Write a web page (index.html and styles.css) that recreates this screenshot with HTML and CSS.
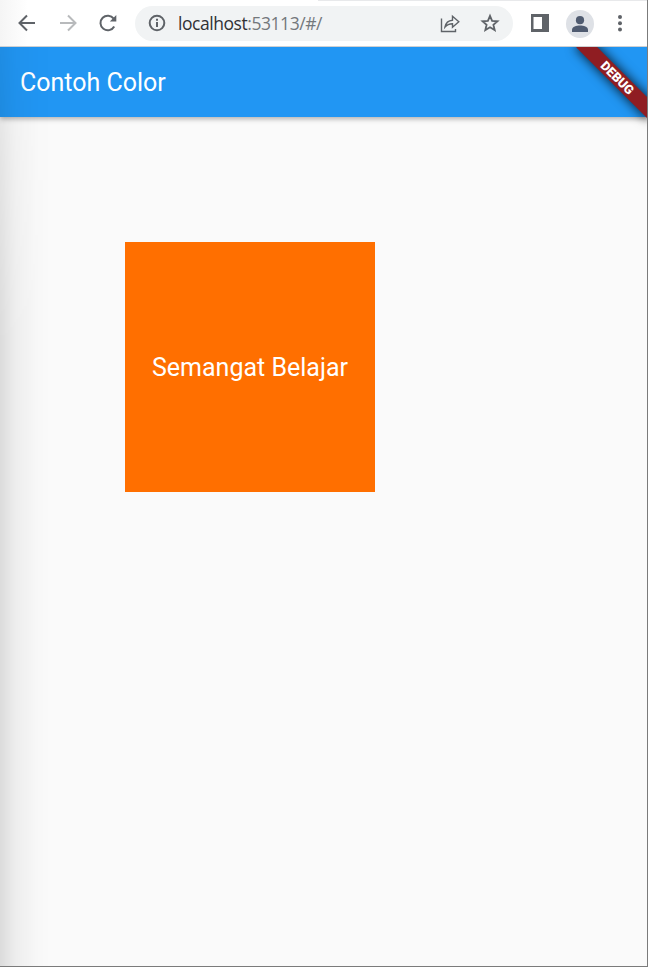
FILE: index.html
```html
<!DOCTYPE html>
<html lang="id">
<head>
<meta charset="utf-8">
<title>Contoh Color</title>
<link rel="stylesheet" href="styles.css">
</head>
<body>
<div class="window">
  <header class="toolbar">
    <svg class="icon back" viewBox="0 0 20 20"><path d="M18 10H3M10 2.500 2.500 10l7.500 7.500"/></svg>
    <svg class="icon forward" viewBox="0 0 20 20"><path d="M2 10h15M10 2.500 17.500 10 10 17.500"/></svg>
    <svg class="icon reload" viewBox="0 0 20 20"><path d="M16.200 13.500A7.300 7.300 0 1 1 15.700 5.700"/><path class="solid" d="M18.300 2v6.500h-6.500z"/></svg>
    <div class="omnibox">
      <svg class="icon info" viewBox="0 0 20 20"><circle cx="10" cy="10" r="7.300"/><path d="M10 9v5M10 5.800v2"/></svg>
      <span class="url"><span class="host">localhost</span>:53113/#/</span>
      <svg class="icon share" viewBox="0 0 20 20"><path d="M1.500 5.500v13h14v-2.500M5 14c.8-4.300 3.500-6.500 7.500-6.800V3.300l6.300 5.500-6.300 5.400v-3.500c-3.500 0-5.500.9-7.500 3.300z"/></svg>
      <svg class="icon star" viewBox="0 0 20 20"><path d="m10 2.800 2.100 5 5.400.5-4.100 3.500 1.300 5.300-4.700-2.800-4.700 2.800 1.300-5.300-4.100-3.500 5.400-.5z"/></svg>
    </div>
    <svg class="icon panel" viewBox="0 0 20 20"><path class="solid" fill-rule="evenodd" d="M1 1h18v18H1zM3.500 4v12h8.500V4z"/></svg>
    <span class="avatar"><svg class="icon person" viewBox="0 0 20 20"><circle class="solid" cx="10" cy="6.200" r="4.100"/><path class="solid" d="M2 18v-2.500c0-2.700 4.500-4.100 8-4.100s8 1.400 8 4.100V18z"/></svg></span>
    <svg class="icon more" viewBox="0 0 20 20"><circle class="solid" cx="10" cy="4" r="2"/><circle class="solid" cx="10" cy="10.300" r="2"/><circle class="solid" cx="10" cy="16.600" r="2"/></svg>
  </header>
  <main class="app">
    <div class="appbar"><h1>Contoh Color</h1></div>
    <div class="box">Semangat Belajar</div>
    <div class="banner">DEBUG</div>
    <div class="edge-shade"></div>
  </main>
</div>
</body>
</html>
```
FILE: styles.css
```css
* { box-sizing: border-box; }
body { margin: 0; font-family: Roboto, sans-serif; background: #fafafa; }
.window {
  position: relative;
  display: flex;
  flex-direction: column;
  height: 967px;
  overflow: hidden;
  border-right: 1px solid #7b7b7b;
  border-bottom: 1px solid #7b7b7b;
}
.toolbar {
  flex: none;
  display: flex;
  align-items: center;
  height: 47px;
  padding: 1px 0 0 17px;
  border-bottom: 1px solid #cfd0d2;
  background:
    linear-gradient(#e8e9eb, #e8e9eb) 318px 0 / 330px 1px no-repeat,
    linear-gradient(90deg, #f5f5f5, #fff 28px);
}
.icon { flex: none; width: 20px; height: 20px; margin-top: -1px; fill: none; stroke: #5f6368; stroke-width: 2; }
.icon .solid { fill: #5f6368; stroke: none; }
.forward { margin-left: 21px; stroke: #b8babc; }
.reload { margin-left: 20px; }
.omnibox {
  display: flex;
  align-items: center;
  width: 378px;
  height: 35px;
  margin-left: 17px;
  padding: 0 13px 0 12px;
  border-radius: 18px;
  background: #f1f3f4;
}
.url {
  flex: 1;
  margin: -2px 0 0 11px;
  font: 17.5px/24px "Open Sans", sans-serif;
  letter-spacing: -0.45px;
  color: #74787c;
}
.host { color: #303134; }
.share { stroke-width: 1.400; }
.star { margin-left: 20px; stroke-width: 1.800; }
.panel { margin-left: 17px; }
.avatar {
  display: flex;
  align-items: center;
  justify-content: center;
  width: 28px;
  height: 28px;
  margin-left: 16px;
  border-radius: 50%;
  background: #dee1e6;
}
.person { margin-top: 0; }
.person .solid { fill: #4f5b70; }
.more { margin-left: 16px; }
.app { position: relative; flex: 1; overflow: hidden; background: #fafafa; }
.appbar {
  display: flex;
  align-items: center;
  height: 70px;
  padding: 2px 0 0 20px;
  background: #2196f3;
  box-shadow: 0 2px 5px rgba(0, 0, 0, 0.3);
}
h1 { margin: 0; font-size: 25px; font-weight: 400; line-height: 30px; color: #fff; }
.box {
  display: flex;
  align-items: center;
  justify-content: center;
  width: 250px;
  height: 250px;
  margin: 125px 0 0 125px;
  background: #ff6f00;
  color: #fff;
  font-size: 25px;
}
.banner {
  position: absolute;
  top: 22.500px;
  right: -20px;
  width: 100px;
  height: 15px;
  padding-left: 1px;
  transform: rotate(45deg);
  background: #8f1d22;
  box-shadow: 0 0 11px 1px rgba(0, 0, 0, 0.75);
  color: #fff;
  font-size: 12.750px;
  font-weight: 900;
  line-height: 15px;
  text-align: center;
}
.edge-shade {
  position: absolute;
  inset: 0 auto 0 0;
  width: 50px;
  background: linear-gradient(90deg, rgba(0, 0, 0, 0.12), rgba(0, 0, 0, 0.05) 15px, rgba(0, 0, 0, 0.012) 36px, transparent);
  mask-image: linear-gradient(rgba(0, 0, 0, 0.5), rgba(0, 0, 0, 0.7) 100px, #000 300px);
}
```
